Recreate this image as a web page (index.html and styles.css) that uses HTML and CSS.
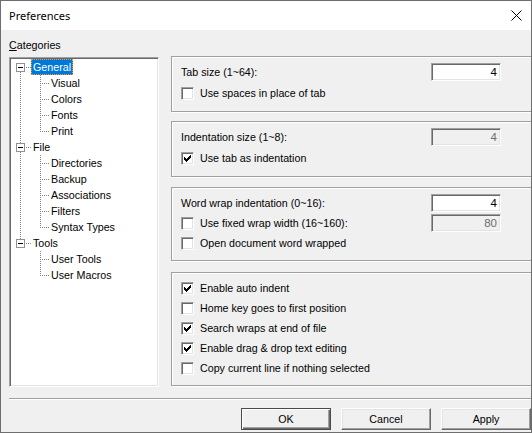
FILE: index.html
```html
<!DOCTYPE html>
<html>
<head>
<meta charset="utf-8">
<link rel="stylesheet" href="styles.css">
</head>
<body>
<div class="window">
  <div class="titlebar">
    <span class="title">Preferences</span>
    <svg class="close" width="11" height="11" viewBox="0 0 11 11"><path d="M0.5 0.5L10.5 10.5M10.5 0.5L0.5 10.5" stroke="#000" stroke-width="1" fill="none"/></svg>
  </div>
  <div class="dialog">
    <div class="content">
      <div class="left">
        <div class="cat-label"><u>C</u>ategories</div>
        <div class="tree">
          <svg class="tree-lines" width="146" height="326" viewBox="0 0 146 326">
            <path d="M10.5 14V85M10.5 94V181M16 9.5H21M16 89.5H21M16 185.5H21M30.5 17V74M32 25.5H40M32 41.5H40M32 57.5H40M32 73.5H40M30.5 97V170M32 105.5H40M32 121.5H40M32 137.5H40M32 153.5H40M32 169.5H40M30.5 193V218M32 201.5H40M32 217.5H40" stroke="#808080" stroke-width="1" stroke-dasharray="1 1" fill="none"/>
          </svg>
          <div class="trow root"><span class="exp"></span><span class="tlabel selected">General</span></div>
          <div class="trow child"><span class="tlabel">Visual</span></div>
          <div class="trow child"><span class="tlabel">Colors</span></div>
          <div class="trow child"><span class="tlabel">Fonts</span></div>
          <div class="trow child"><span class="tlabel">Print</span></div>
          <div class="trow root"><span class="exp"></span><span class="tlabel">File</span></div>
          <div class="trow child"><span class="tlabel">Directories</span></div>
          <div class="trow child"><span class="tlabel">Backup</span></div>
          <div class="trow child"><span class="tlabel">Associations</span></div>
          <div class="trow child"><span class="tlabel">Filters</span></div>
          <div class="trow child"><span class="tlabel">Syntax Types</span></div>
          <div class="trow root"><span class="exp"></span><span class="tlabel">Tools</span></div>
          <div class="trow child"><span class="tlabel">User Tools</span></div>
          <div class="trow child"><span class="tlabel">User Macros</span></div>
        </div>
      </div>
      <div class="right">
        <div class="group g1">
          <div class="row"><span class="lbl">Tab size (1~64):</span><span class="field">4</span></div>
          <div class="row gap3"><span class="cb"></span><span class="cblbl">Use spaces in place of tab</span></div>
        </div>
        <div class="group g2">
          <div class="row"><span class="lbl">Indentation size (1~8):</span><span class="field disabled">4</span></div>
          <div class="row gap3"><span class="cb"><svg width="11" height="11" viewBox="1 1 11 11"><path d="M9 3h1v1h-1zM8 4h2v1h-2zM3 5h1v1h-1zM7 5h3v1h-3zM3 6h2v1h-2zM6 6h3v1h-3zM3 7h5v1h-5zM4 8h3v1h-3zM5 9h1v1h-1z" fill="#000"/></svg></span><span class="cblbl">Use tab as indentation</span></div>
        </div>
        <div class="group g3">
          <div class="row"><span class="lbl">Word wrap indentation (0~16):</span><span class="field">4</span></div>
          <div class="row gap2"><span class="cb"></span><span class="cblbl">Use fixed wrap width (16~160):</span><span class="field disabled">80</span></div>
          <div class="row gap2"><span class="cb"></span><span class="cblbl">Open document word wrapped</span></div>
        </div>
        <div class="group g4">
          <div class="row"><span class="cb"><svg width="11" height="11" viewBox="1 1 11 11"><path d="M9 3h1v1h-1zM8 4h2v1h-2zM3 5h1v1h-1zM7 5h3v1h-3zM3 6h2v1h-2zM6 6h3v1h-3zM3 7h5v1h-5zM4 8h3v1h-3zM5 9h1v1h-1z" fill="#000"/></svg></span><span class="cblbl">Enable auto indent</span></div>
          <div class="row gap2"><span class="cb"></span><span class="cblbl">Home key goes to first position</span></div>
          <div class="row gap2"><span class="cb"><svg width="11" height="11" viewBox="1 1 11 11"><path d="M9 3h1v1h-1zM8 4h2v1h-2zM3 5h1v1h-1zM7 5h3v1h-3zM3 6h2v1h-2zM6 6h3v1h-3zM3 7h5v1h-5zM4 8h3v1h-3zM5 9h1v1h-1z" fill="#000"/></svg></span><span class="cblbl">Search wraps at end of file</span></div>
          <div class="row gap2"><span class="cb"><svg width="11" height="11" viewBox="1 1 11 11"><path d="M9 3h1v1h-1zM8 4h2v1h-2zM3 5h1v1h-1zM7 5h3v1h-3zM3 6h2v1h-2zM6 6h3v1h-3zM3 7h5v1h-5zM4 8h3v1h-3zM5 9h1v1h-1z" fill="#000"/></svg></span><span class="cblbl">Enable drag &amp; drop text editing</span></div>
          <div class="row gap2"><span class="cb"></span><span class="cblbl">Copy current line if nothing selected</span></div>
        </div>
      </div>
    </div>
    <div class="sep"></div>
    <div class="buttons">
      <button class="btn default">OK</button>
      <button class="btn">Cancel</button>
      <button class="btn">Apply</button>
    </div>
  </div>
</div>
</body>
</html>
```
FILE: styles.css
```css
* { box-sizing: border-box; }
html, body { margin: 0; padding: 0; }
body {
  width: 532px;
  height: 433px;
  overflow: hidden;
  font-family: "Liberation Sans", Arial, sans-serif;
  font-size: 10.7px;
  color: #000;
}
.window {
  width: 532px;
  height: 433px;
  border: 1px solid #6e6e6e;
  background: #f0f0f0;
  display: flex;
  flex-direction: column;
  overflow: hidden;
}
.titlebar {
  height: 29px;
  flex: none;
  background: #fff;
  display: flex;
  align-items: center;
  justify-content: space-between;
  padding: 0 9px 0 8px;
}
.title {
  font-family: "Noto Sans", "Liberation Sans", sans-serif;
  font-size: 11px;
  color: #000;
}
.close { display: block; }
.dialog {
  flex: 1;
  display: flex;
  flex-direction: column;
  background: #f0f0f0;
}
.content {
  display: flex;
  align-items: flex-start;
  padding: 8px 0 0 8px;
}
.left {
  width: 150px;
  flex: none;
}
.cat-label {
  height: 14px;
  line-height: 14px;
}
.cat-label u { text-decoration: underline; text-underline-offset: 1px; }
.tree {
  position: relative;
  margin-top: 5px;
  height: 330px;
  background: #fff;
  border: 1px solid;
  border-color: #a0a0a0 #fff #fff #a0a0a0;
  box-shadow: inset 1px 1px 0 #696969, inset -1px -1px 0 #e3e3e3;
  padding: 1px;
}
.tree-lines {
  position: absolute;
  left: 0;
  top: 0;
}
.trow {
  height: 16px;
  display: flex;
  align-items: flex-start;
  position: relative;
}
.trow.root { padding-left: 5px; }
.trow.child { padding-left: 38px; }
.exp {
  width: 9px;
  height: 9px;
  margin-top: 4px;
  border: 1px solid #919191;
  background: #fff;
  position: relative;
  flex: none;
}
.exp::after {
  content: "";
  position: absolute;
  left: 1px;
  top: 3px;
  width: 5px;
  height: 1px;
  background: #000;
}
.tlabel {
  height: 16px;
  line-height: 14px;
  padding: 0 1px;
  border: 1px solid transparent;
  white-space: nowrap;
}
.root .tlabel { margin-left: 6px; }
.tlabel.selected {
  background: #0078d7;
  color: #fff;
  border: 1px dotted #f59a3a;
}
.right {
  flex: 1;
  margin-left: 12px;
  margin-top: 18px;
  margin-right: -8px;
  display: flex;
  flex-direction: column;
}
.group {
  border: 1px solid #a0a0a0;
  box-shadow: inset 1px 1px 0 #fff, 1px 1px 0 #fff;
  padding: 6px 0 0 9px;
}
.g1 { height: 56px; }
.g2 { height: 56px; margin-top: 9px; }
.g3 { height: 74px; margin-top: 10px; }
.g4 { height: 114px; margin-top: 11px; }
.row {
  width: 320px;
  height: 18px;
  display: flex;
  align-items: center;
}
.row.gap3 { margin-top: 3px; }
.row.gap2 { margin-top: 2px; }
.lbl { white-space: nowrap; }
.cblbl { margin-left: 6px; white-space: nowrap; }
.field {
  margin-left: auto;
  width: 70px;
  height: 18px;
  line-height: 16px;
  text-align: right;
  padding-right: 3px;
  background: #fff;
  border: 1px solid;
  border-color: #a0a0a0 #fff #fff #a0a0a0;
  box-shadow: inset 1px 1px 0 #696969, inset -1px -1px 0 #e3e3e3;
  font-size: 11.5px;
}
.field.disabled {
  background: #f0f0f0;
  color: #6d6d6d;
}
.cb {
  width: 13px;
  height: 13px;
  flex: none;
  background: #fff;
  border: 1px solid;
  border-color: #a0a0a0 #fff #fff #a0a0a0;
  box-shadow: inset 1px 1px 0 #696969, inset -1px -1px 0 #e3e3e3;
}
.cb svg { display: block; }
.sep {
  margin: 11px 0 0 8px;
  height: 2px;
  border-top: 1px solid #a0a0a0;
  border-bottom: 1px solid #fff;
}
.buttons {
  display: flex;
  justify-content: flex-end;
  gap: 10px;
  margin-top: 8px;
}
.btn {
  width: 90px;
  height: 22px;
  padding: 0;
  margin: 0;
  font-family: "Liberation Sans", Arial, sans-serif;
  font-size: 10.7px;
  color: #000;
  background: #f0f0f0;
  border: 1px solid;
  border-color: #fff #696969 #696969 #fff;
  box-shadow: inset -1px -1px 0 #a0a0a0, inset 1px 1px 0 #e3e3e3;
  border-radius: 0;
}
.btn.default {
  border-color: #4a4a4a;
  box-shadow: inset 1px 1px 0 #fff, inset -1px -1px 0 #696969, inset -2px -2px 0 #a0a0a0;
}
```
